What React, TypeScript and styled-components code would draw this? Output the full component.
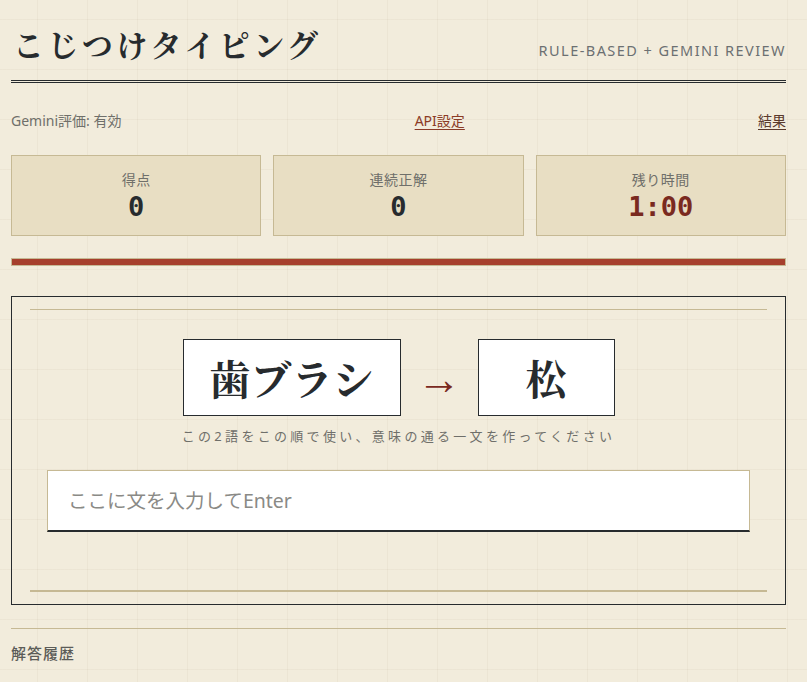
import React from "react";
import styled, { createGlobalStyle } from "styled-components";

const palette = {
  paper: "#f2ecdc",
  grid: "rgba(120, 100, 60, 0.05)",
  ink: "#272b2e",
  muted: "#6f6f6a",
  tan: "#c6b994",
  card: "#e8dec3",
  red: "#a63f2c",
  rust: "#7a2a1f",
  link: "#8b3b26",
};

const serif = `"Noto Serif CJK JP", "Liberation Serif", "Noto Sans CJK JP", serif`;
const sans = `"Noto Sans", "Noto Sans CJK JP", sans-serif`;
const mono = `"DejaVu Sans Mono", "Liberation Mono", monospace`;

const GlobalStyle = createGlobalStyle`
  html, body {
    margin: 0;
    padding: 0;
  }
  body {
    background-color: ${palette.paper};
    background-image:
      linear-gradient(${palette.grid} 1px, transparent 1px),
      linear-gradient(90deg, ${palette.grid} 1px, transparent 1px);
    background-size: 50px 50px;
    background-position: 37px 19px;
    font-family: ${sans};
    color: ${palette.ink};
  }
`;

const Page = styled.div`
  width: 775px;
  margin-left: 11px;
  padding-bottom: 40px;
`;

const Header = styled.header`
  display: flex;
  align-items: flex-end;
  justify-content: space-between;
  padding: 25px 0 18px 2px;
  border-bottom: 3px double ${palette.ink};
`;

const Title = styled.h1`
  margin: 0;
  font-family: ${serif};
  font-size: 31px;
  font-weight: 700;
  letter-spacing: 3.4px;
  line-height: 1.2;
`;

const Tagline = styled.div`
  font-family: ${sans};
  font-size: 14.5px;
  letter-spacing: 1.45px;
  color: #6c7072;
  padding-bottom: 2px;
`;

const StatusRow = styled.div`
  display: flex;
  align-items: center;
  justify-content: space-between;
  margin-top: 27px;
  font-size: 14px;
`;

const Status = styled.span`
  color: ${palette.muted};
`;

const LinkText = styled.a<{ $color?: string }>`
  color: ${(p) => p.$color || palette.link};
  text-decoration: underline;
  text-underline-offset: 3px;
  cursor: pointer;
`;

const Stats = styled.div`
  display: grid;
  grid-template-columns: repeat(3, 1fr);
  gap: 12px;
  margin-top: 25px;
`;

const StatCard = styled.div`
  height: 81px;
  box-sizing: border-box;
  background: ${palette.card};
  border: 1px solid ${palette.tan};
  display: flex;
  flex-direction: column;
  align-items: center;
  padding-top: 13px;
`;

const StatLabel = styled.div`
  font-size: 14px;
  letter-spacing: 0.5px;
  color: ${palette.muted};
`;

const StatValue = styled.div<{ $warn?: boolean }>`
  font-family: ${mono};
  font-weight: 700;
  font-size: 27px;
  line-height: 1.2;
  margin-top: 2px;
  color: ${(p) => (p.$warn ? palette.rust : palette.ink)};
`;

const Track = styled.div`
  margin-top: 22px;
  height: 8px;
  box-sizing: border-box;
  border: 1px solid ${palette.tan};
  background: ${palette.card};
`;

const Fill = styled.div`
  height: 100%;
  background: ${palette.red};
`;

const Board = styled.section`
  margin-top: 30px;
  border: 1px solid ${palette.ink};
  padding: 12px 18px 12px;
`;

const Rule = styled.hr<{ $thick?: boolean }>`
  margin: 0;
  border: none;
  height: ${(p) => (p.$thick ? 2 : 1)}px;
  background: ${palette.tan};
`;

const Prompt = styled.div`
  display: flex;
  flex-direction: column;
  align-items: center;
  padding-top: 29px;
`;

const Words = styled.div`
  display: flex;
  align-items: center;
  gap: 23px;
`;

const WordBox = styled.div`
  background: #fff;
  border: 1px solid ${palette.ink};
  height: 77px;
  min-width: 137px;
  box-sizing: border-box;
  padding: 0 26px;
  display: flex;
  align-items: center;
  justify-content: center;
  font-family: ${serif};
  font-weight: 700;
  font-size: 41px;
`;

const Arrow = styled.span`
  display: flex;
  justify-content: center;
  width: 31px;
  font-family: "Liberation Serif", serif;
  font-size: 44px;
  color: ${palette.rust};
  line-height: 1;
  padding-top: 4px;
`;

const Hint = styled.div`
  margin-top: 10px;
  font-size: 13px;
  letter-spacing: 3.3px;
  color: ${palette.muted};
`;

const AnswerInput = styled.input`
  display: block;
  box-sizing: border-box;
  width: 703px;
  height: 62px;
  margin: 25px 0 0 17px;
  padding: 0 20px;
  background: #fff;
  border: 1px solid ${palette.tan};
  border-bottom: 2px solid ${palette.ink};
  border-radius: 0;
  font-family: ${sans};
  font-size: 19.5px;
  color: ${palette.ink};
  outline: none;
  &::placeholder {
    color: #8a8a86;
  }
`;

const Spacer = styled.div`
  height: 58px;
`;

const History = styled.section`
  margin-top: 23px;
  border-top: 1px solid ${palette.tan};
  padding-top: 13px;
`;

const HistoryTitle = styled.h2`
  margin: 0;
  font-size: 15px;
  font-weight: 500;
  letter-spacing: 1px;
  color: #5c5c58;
`;

const App: React.FC = () => {
  return (
    <>
      <GlobalStyle />
      <Page>
        <Header>
          <Title>こじつけタイピング</Title>
          <Tagline>RULE-BASED + GEMINI REVIEW</Tagline>
        </Header>

        <StatusRow>
          <Status>Gemini評価: 有効</Status>
          <LinkText>API設定</LinkText>
          <LinkText $color="#5a3a2c">結果</LinkText>
        </StatusRow>

        <Stats>
          <StatCard>
            <StatLabel>得点</StatLabel>
            <StatValue>0</StatValue>
          </StatCard>
          <StatCard>
            <StatLabel>連続正解</StatLabel>
            <StatValue>0</StatValue>
          </StatCard>
          <StatCard>
            <StatLabel>残り時間</StatLabel>
            <StatValue $warn>1:00</StatValue>
          </StatCard>
        </Stats>

        <Track>
          <Fill style={{ width: "100%" }} />
        </Track>

        <Board>
          <Rule />
          <Prompt>
            <Words>
              <WordBox>歯ブラシ</WordBox>
              <Arrow>→</Arrow>
              <WordBox>松</WordBox>
            </Words>
            <Hint>この2語をこの順で使い、意味の通る一文を作ってください</Hint>
          </Prompt>
          <AnswerInput placeholder="ここに文を入力してEnter" />
          <Spacer />
          <Rule $thick />
        </Board>

        <History>
          <HistoryTitle>解答履歴</HistoryTitle>
        </History>
      </Page>
    </>
  );
};

export default App;
